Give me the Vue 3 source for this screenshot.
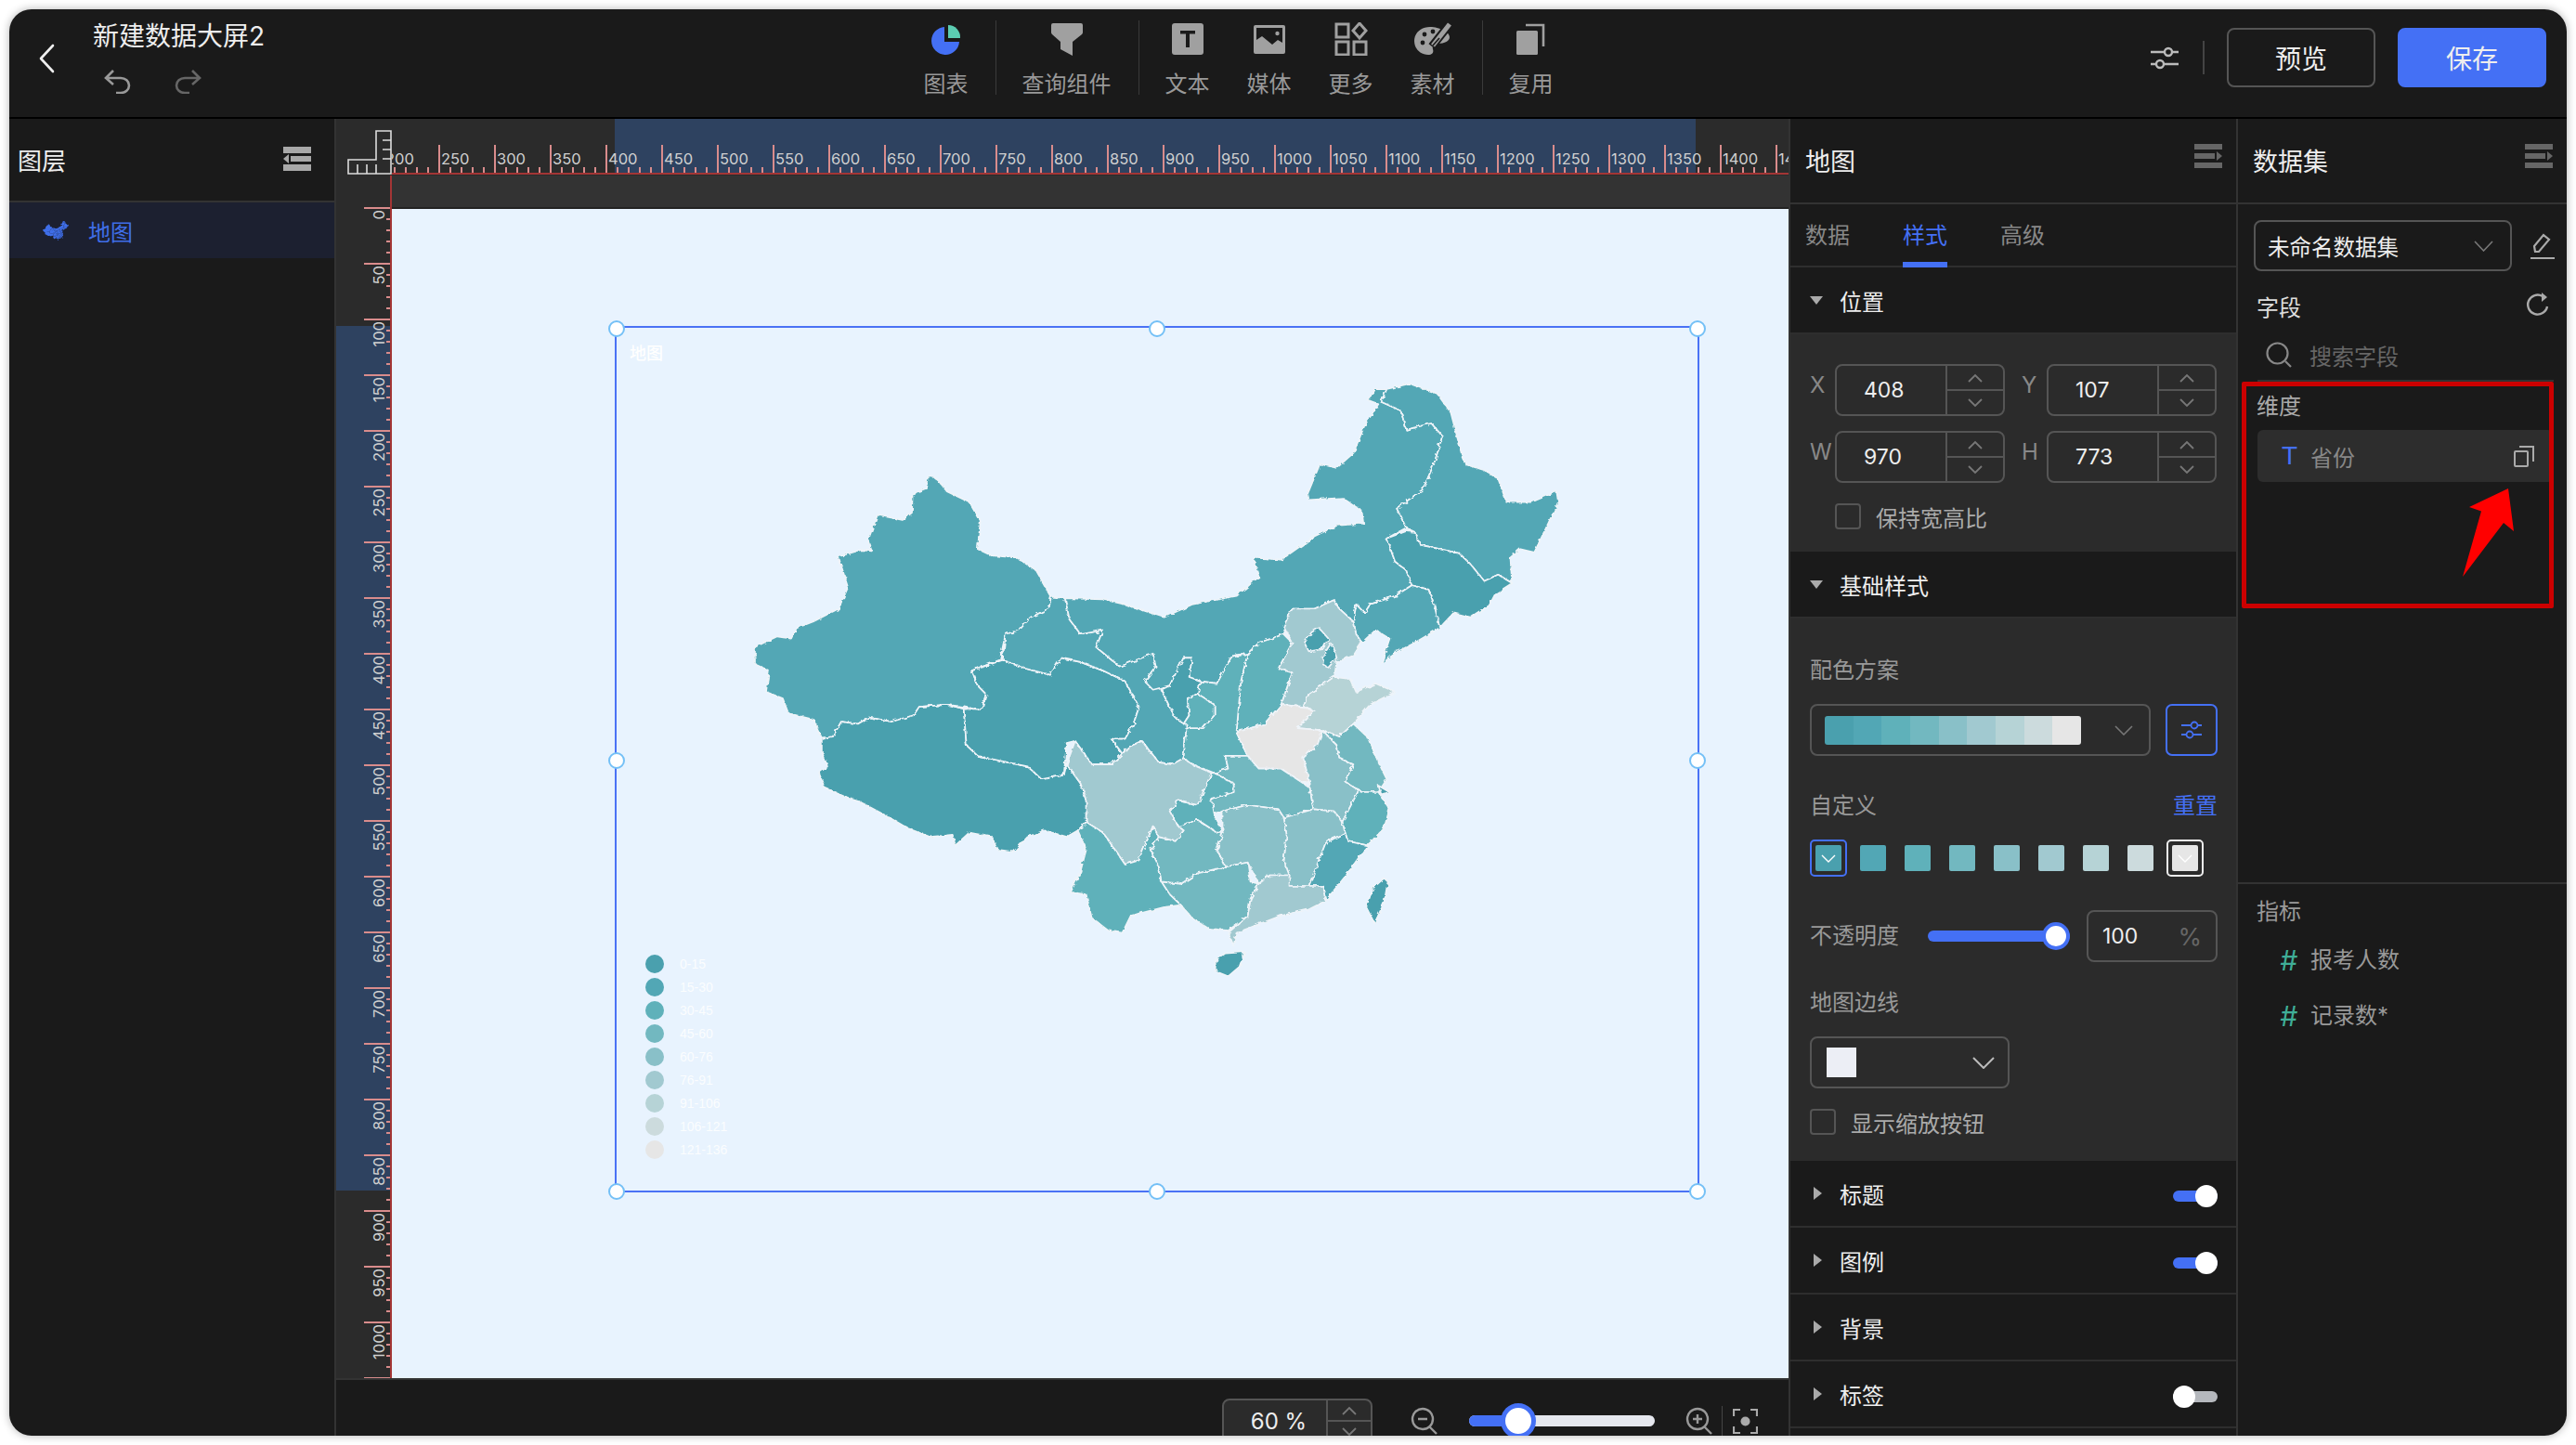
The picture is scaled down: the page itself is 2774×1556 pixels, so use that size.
<template>
  <div class="page">
    <div class="app">
      <!-- top bar -->
      <header class="topbar">
        <div class="top-left">
          <svg class="back" width="18" height="32" viewBox="0 0 18 32"><path d="M16 2 3 16l13 14" fill="none" stroke="#eee" stroke-width="2.6" stroke-linecap="round" stroke-linejoin="round"/></svg>
          <div class="title-col">
            <div class="title">新建数据大屏2</div>
            <div class="history">
              <svg width="30" height="27" viewBox="0 0 30 27"><path d="M10 2 2 10l8 7M3 10h15a9 8 0 0 1 0 16h-5" fill="none" stroke="#999" stroke-width="2.6"/></svg>
              <svg width="30" height="27" viewBox="0 0 30 27"><path d="M20 2l8 8-8 7M27 10H12a9 8 0 0 0 0 16h5" fill="none" stroke="#666" stroke-width="2.6"/></svg>
            </div>
          </div>
        </div>

        <div class="tools">
          <div class="tool">
            <svg width="34" height="34" viewBox="0 0 34 34"><path d="M15 4A15 15 0 1 0 31 20H15Z" fill="#4470f5"/><path d="M19 2a13 13 0 0 1 13 14H19Z" fill="#5ccdb2"/></svg>
            <span>图表</span>
          </div>
          <i class="tool-sep"></i>
          <div class="tool wide">
            <svg width="34" height="36" viewBox="0 0 34 36"><path d="M2 1h30q2 0 2 2v8q0 1-1 2L23 21v15l-13-7v-8L1 13q-1-1-1-2V3q0-2 2-2Z" fill="#a0a0a0"/></svg>
            <span>查询组件</span>
          </div>
          <i class="tool-sep"></i>
          <div class="tool">
            <svg width="34" height="36" viewBox="0 0 34 36"><rect y="1" width="34" height="34" rx="3" fill="#a0a0a0"/><path d="M9 9h16v3.500h-6V27h-4V12.500H9Z" fill="#1a1a1a"/></svg>
            <span>文本</span>
          </div>
          <div class="tool gap">
            <svg width="34" height="36" viewBox="0 0 34 36"><rect y="3" width="34" height="31" rx="2" fill="#a0a0a0"/><path d="M3 6h28v16l-5-3-6 5-11-9-6 4Z" fill="#1a1a1a"/><circle cx="25.500" cy="12" r="2.200" fill="#a0a0a0"/></svg>
            <span>媒体</span>
          </div>
          <div class="tool gap">
            <svg width="36" height="36" viewBox="0 0 36 36" fill="none" stroke="#a0a0a0" stroke-width="3"><rect x="2" y="2" width="13" height="14"/><path d="m27 1 7 8-7 8-7-8Z"/><rect x="2" y="21" width="13" height="14"/><rect x="21" y="21" width="13" height="14"/></svg>
            <span>更多</span>
          </div>
          <div class="tool gap">
            <svg width="40" height="36" viewBox="0 0 40 36"><path d="M19 5C8 4 0 11 0 20c0 9 7 15 15 15 5 0 6-3 5-6-1-4 1-6 5-6 8 0 13-3 13-7 0-5-9-10-19-11Z" fill="#a0a0a0"/><g fill="#1a1a1a"><circle cx="11" cy="13" r="2.400"/><circle cx="9" cy="22" r="2.400"/><circle cx="20" cy="10" r="2.400"/></g><path d="M38 2 19 26" stroke="#1a1a1a" stroke-width="9" fill="none"/><path d="M38 2 20 25" stroke="#a0a0a0" stroke-width="5" fill="none"/><path d="M27 17 20 25" stroke="#1a1a1a" stroke-width="1.600" fill="none"/></svg>
            <span>素材</span>
          </div>
          <i class="tool-sep"></i>
          <div class="tool">
            <svg width="32" height="36" viewBox="0 0 32 36"><rect x="0" y="9" width="23" height="26" rx="1.500" fill="#a0a0a0"/><path d="M10 3h19v23" fill="none" stroke="#a0a0a0" stroke-width="2.600"/></svg>
            <span>复用</span>
          </div>
        </div>

        <div class="top-right">
          <svg class="sliders" width="30" height="25" viewBox="0 0 30 25" fill="none" stroke="#bbb" stroke-width="2.400"><path d="M0 6h15M23 6h7M0 19h6M14 19h16"/><circle cx="19" cy="6" r="4"/><circle cx="10" cy="19" r="4"/></svg>
          <i class="top-sep"></i>
          <button class="btn">预览</button>
          <button class="btn primary">保存</button>
        </div>
      </header>

      <div class="main">
        <!-- layers -->
        <aside class="layers">
          <div class="panel-head">
            <span class="layers-title">图层</span>
            <svg class="fold-left" width="30" height="26" viewBox="0 0 30 26" fill="#a8a8a8"><rect width="30" height="7"/><rect y="19" width="30" height="7"/><rect x="8" y="10" width="22" height="6"/><path d="M6 8v10L0 13Z"/></svg>
          </div>
          <div class="layer-row">
            <svg width="28" height="21" viewBox="50 70 1450 1400" preserveAspectRatio="none">
              <polygon v-for="p in provinces" :key="p.name" :points="p.pts" fill="#3f6ee8"/>
            </svg>
            <span>地图</span>
          </div>
        </aside>

        <!-- stage -->
        <section class="stage">
          <div class="stage-top">
            <div class="corner">
              <svg width="60" height="61" viewBox="0 0 60 61" fill="none" stroke="#ddd" stroke-width="1.600"><path d="M13 44h30V13h16v46H13Z"/><path d="M23 49v10M33 49v10M43 49v10M50 23h9M50 33h9M50 43h9"/></svg>
            </div>
            <svg class="hruler" width="1504" height="61">
              <rect x="240" width="1164" height="59" fill="#2e4260"/>
              <g v-for="t in hTicks" :key="t.x">
                <rect :x="t.x - 1" :y="t.major ? 28 : 52" width="2" :height="t.major ? 31 : 7" fill="#d98c8c"/>
                <text v-if="t.major" :x="t.x + 2" y="49" class="tick-text">{{ t.v }}</text>
              </g>
              <rect y="58" width="1504" height="2" fill="#a33535"/>
            </svg>
          </div>
          <div class="stage-mid">
            <svg class="vruler" width="60" height="1295">
              <rect y="162" width="58" height="931" fill="#2e4260"/>
              <g v-for="t in vTicks" :key="t.y">
                <rect :x="t.major ? 30 : 54" :y="t.y - 1" :width="t.major ? 30 : 6" height="2" fill="#d98c8c"/>
                <text v-if="t.major" class="tick-text" text-anchor="end" :transform="`translate(52 ${t.y + 2}) rotate(-90)`">{{ t.v }}</text>
              </g>
              <rect x="58" width="2" height="1295" fill="#a33535"/>
            </svg>
            <div class="stage-body">
              <div class="band"></div>
              <div class="canvas">
                <svg class="map" width="940" height="720" viewBox="0 0 1568 1568" preserveAspectRatio="none">
                  <defs>
                    <filter id="rough" x="-2%" y="-2%" width="104%" height="104%">
                      <feTurbulence type="fractalNoise" baseFrequency="0.09" numOctaves="3" seed="4"/>
                      <feDisplacementMap in="SourceGraphic" scale="9"/>
                    </filter>
                  </defs>
                  <g filter="url(#rough)">
                    <polygon v-for="p in provinces" :key="p.name" :points="p.pts" :fill="p.c" stroke="#eff4f9" stroke-width="1.700" vector-effect="non-scaling-stroke" stroke-linejoin="round"/>
                  </g>
                </svg>
                <div class="selection">
                  <span class="map-name">地图</span>
                  <div class="legend">
                    <div v-for="(l, i) in legend" :key="l" class="legend-row">
                      <i :style="{ background: palette[i] }"></i>{{ l }}
                    </div>
                  </div>
                  <i v-for="h in handles" :key="h.k" class="handle" :style="{ left: h.x, top: h.y }"></i>
                </div>
              </div>
            </div>
          </div>
          <div class="stage-bottom">
            <div class="zoom-input">
              <div class="zoom-value">60 %</div>
              <div class="stepper">
                <span><svg width="16" height="10" viewBox="0 0 16 10"><path d="M1 9l7-7 7 7" fill="none" stroke="#777" stroke-width="1.800"/></svg></span>
                <span><svg width="16" height="10" viewBox="0 0 16 10"><path d="M1 1l7 7 7-7" fill="none" stroke="#777" stroke-width="1.800"/></svg></span>
              </div>
            </div>
            <svg class="z-out" width="30" height="30" viewBox="0 0 30 30" fill="none" stroke="#999" stroke-width="2.400"><circle cx="13" cy="13" r="11"/><path d="M20 21l8 8M8 13h10"/></svg>
            <div class="zoom-slider"><i class="zoom-fill"></i><i class="zoom-knob"></i></div>
            <svg class="z-in" width="30" height="30" viewBox="0 0 30 30" fill="none" stroke="#999" stroke-width="2.400"><circle cx="13" cy="13" r="11"/><path d="M20 21l8 8M8 13h10M13 8v10"/></svg>
            <i class="zoom-sep"></i>
            <svg width="27" height="27" viewBox="0 0 27 27" fill="none" stroke="#aaa" stroke-width="2.200"><path d="M1 8V1h7M19 1h7v7M26 19v7h-7M8 26H1v-7"/><circle cx="13.500" cy="13.500" r="5" fill="#aaa" stroke="none"/></svg>
          </div>
        </section>

        <!-- props -->
        <section class="props">
          <div class="panel-head right-head">
            <span class="panel-title">地图</span>
            <svg class="fold-right" width="30" height="26" viewBox="0 0 30 26" fill="#666"><rect width="30" height="6"/><rect y="20" width="30" height="6"/><rect y="10" width="22" height="6"/><path d="M24 8v10l6-5Z"/></svg>
          </div>
          <div class="tabs">
            <span>数据</span><span class="active">样式</span><span>高级</span>
          </div>

          <div class="sec-head"><i class="tri-down"></i>位置</div>
          <div class="sec-body pos-body">
            <div class="pos-grid">
              <div v-for="f in posFields" :key="f.k" class="pos-field">
                <label>{{ f.k }}</label>
                <div class="num-input">
                  <div class="num-value">{{ f.v }}</div>
                  <div class="stepper">
                    <span><svg width="16" height="10" viewBox="0 0 16 10"><path d="M1 9l7-7 7 7" fill="none" stroke="#777" stroke-width="1.800"/></svg></span>
                    <span><svg width="16" height="10" viewBox="0 0 16 10"><path d="M1 1l7 7 7-7" fill="none" stroke="#777" stroke-width="1.800"/></svg></span>
                  </div>
                </div>
              </div>
            </div>
            <div class="check-row keep"><i class="check"></i>保持宽高比</div>
          </div>

          <div class="sec-head"><i class="tri-down"></i>基础样式</div>
          <div class="sec-body base-body">
            <div class="field-label">配色方案</div>
            <div class="scheme-row">
              <div class="scheme-select">
                <div class="scheme-bar"><i v-for="c in palette" :key="c" :style="{ background: c }"></i></div>
                <svg width="20" height="11" viewBox="0 0 20 11"><path d="M1 1l9 9 9-9" fill="none" stroke="#777" stroke-width="1.600"/></svg>
              </div>
              <div class="scheme-btn">
                <svg width="22" height="20" viewBox="0 0 22 20" fill="none" stroke="#4470f5" stroke-width="1.800"><path d="M0 5h10M18 5h4M0 15h5M13 15h9"/><circle cx="14" cy="5" r="3.500"/><circle cx="9" cy="15" r="3.500"/></svg>
              </div>
            </div>
            <div class="custom-row">
              <span class="field-label">自定义</span>
              <span class="reset">重置</span>
            </div>
            <div class="swatches">
              <div v-for="(c, i) in palette" :key="c" class="swatch" :class="{ first: i === 0, last: i === 8 }">
                <i :style="{ background: c }">
                  <svg v-if="i === 0 || i === 8" width="16" height="9" viewBox="0 0 16 9"><path d="M1 1l7 7 7-7" fill="none" stroke="#fff" stroke-width="1.400"/></svg>
                </i>
              </div>
            </div>
            <div class="opacity-row">
              <span class="field-label">不透明度</span>
              <div class="op-slider"><i class="op-knob"></i></div>
              <div class="op-input"><span>100</span><em>%</em></div>
            </div>
            <div class="field-label border-label">地图边线</div>
            <div class="border-select">
              <i class="border-color"></i>
              <svg width="24" height="13" viewBox="0 0 24 13"><path d="M1 1l11 11L23 1" fill="none" stroke="#bbb" stroke-width="2"/></svg>
            </div>
            <div class="check-row zoom-check"><i class="check"></i>显示缩放按钮</div>
          </div>

          <div v-for="s in collapsed" :key="s.name" class="sec-head fold">
            <i class="tri-right"></i>{{ s.name }}
            <div v-if="s.on !== null" class="toggle" :class="{ on: s.on }"><i></i></div>
          </div>
        </section>

        <!-- dataset -->
        <aside class="dataset">
          <div class="panel-head right-head">
            <span class="panel-title">数据集</span>
            <svg class="fold-right" width="30" height="26" viewBox="0 0 30 26" fill="#666"><rect width="30" height="6"/><rect y="20" width="30" height="6"/><rect y="10" width="22" height="6"/><path d="M24 8v10l6-5Z"/></svg>
          </div>
          <div class="dims">
            <div class="ds-row">
              <div class="ds-select">
                <span>未命名数据集</span>
                <svg width="21" height="12" viewBox="0 0 21 12"><path d="M1 1l9.500 10L20 1" fill="none" stroke="#777" stroke-width="1.600"/></svg>
              </div>
              <svg width="26" height="28" viewBox="0 0 26 28" fill="none" stroke="#aaa" stroke-width="2.200"><path d="M5 20l-1-6L14 2l6 5L9 20ZM0 27h26"/></svg>
            </div>
            <div class="field-head">
              <span>字段</span>
              <svg width="26" height="25" viewBox="0 0 26 25" fill="none" stroke="#aaa" stroke-width="2.400"><path d="M23 15A10.500 10.500 0 1 1 18 4"/><path d="M17 0l6 5-6 5" fill="#aaa" stroke="none"/></svg>
            </div>
            <div class="search">
              <svg width="28" height="28" viewBox="0 0 28 28" fill="none" stroke="#888" stroke-width="2.200"><circle cx="12.500" cy="12.500" r="11"/><path d="M21 21l6 6"/></svg>
              <span>搜索字段</span>
            </div>
            <div class="dim-title">维度</div>
            <div class="dim-item">
              <span class="t-mark">T</span>
              <span class="dim-name">省份</span>
              <svg width="22" height="24" viewBox="0 0 22 24" fill="none" stroke="#aaa" stroke-width="2"><rect x="1" y="7" width="14" height="16" rx="1"/><path d="M6 2h15v16"/></svg>
            </div>
          </div>
          <div class="metrics">
            <div class="metric-title">指标</div>
            <div class="metric"><em>#</em>报考人数</div>
            <div class="metric second"><em>#</em>记录数*</div>
          </div>

          <!-- annotation -->
          <div class="red-box"></div>
          <svg class="red-arrow" width="56" height="96" viewBox="0 0 56 96"><path d="M49 0 7 20l13 4.500L0 95l44-58 11 9Z" fill="#ff0000"/></svg>
        </aside>
      </div>
    </div>
  </div>
</template>

<script setup>
import { computed } from 'vue'

const palette = ['#4aa0ae', '#52a7b5', '#5fb1ba', '#72b8c0', '#89c0c8', '#a1c9d0', '#b6d3d6', '#ccdbdd', '#e6e6e6']
const legend = ['0-15', '15-30', '30-45', '45-60', '60-76', '76-91', '91-106', '106-121', '121-136']

const posFields = [
  { k: 'X', v: 408 },
  { k: 'Y', v: 107 },
  { k: 'W', v: 970 },
  { k: 'H', v: 773 }
]

const collapsed = [
  { name: '标题', on: true },
  { name: '图例', on: true },
  { name: '背景', on: null },
  { name: '标签', on: false }
]

const handles = [
  { k: 'tl', x: '0%', y: '0%' },
  { k: 'tc', x: '50%', y: '0%' },
  { k: 'tr', x: '100%', y: '0%' },
  { k: 'ml', x: '0%', y: '50%' },
  { k: 'mr', x: '100%', y: '50%' },
  { k: 'bl', x: '0%', y: '100%' },
  { k: 'bc', x: '50%', y: '100%' },
  { k: 'br', x: '100%', y: '100%' }
]

// ruler ticks: 12px per 10 units, labelled every 50
const hTicks = computed(() => {
  const out = []
  for (let v = 200; v <= 1450; v += 10) {
    out.push({ v, x: 51 + (v - 250) * 1.2, major: v % 50 === 0 })
  }
  return out.filter(t => t.x >= 0 || t.major)
})
const vTicks = computed(() => {
  const out = []
  for (let v = 0; v <= 1050; v += 10) {
    out.push({ v, y: 35 + v * 1.2, major: v % 50 === 0 })
  }
  return out
})

const [c1, c2, c3, c4, c5, c6, c7, , c9] = palette

// province outlines, in coordinates of the map svg's viewBox
const provinces = [
  { name: 'xinjiang', c: c2, pts: '375,290 385,300 400,325 440,350 460,395 455,460 480,475 525,480 560,510 587,572 583,600 550,620 530,650 505,660 495,720 445,745 455,780 470,800 462,838 430,830 400,825 350,830 340,850 300,865 260,855 240,870 210,865 195,900 175,903 160,860 115,845 105,810 75,795 80,745 55,730 55,690 95,665 120,670 130,645 160,630 205,600 222,550 205,478 245,462 265,465 258,440 275,380 320,392 337,375 338,330 362,318 365,292' },
  { name: 'tibet', c: c1, pts: '175,903 195,900 210,865 240,870 260,855 300,865 340,850 350,830 400,825 430,835 435,920 455,945 490,955 545,970 570,1000 610,990 615,965 640,1010 650,1050 650,1100 635,1120 615,1135 575,1120 545,1135 520,1170 490,1165 480,1135 440,1125 415,1155 410,1130 370,1135 330,1115 290,1085 240,1050 215,1040 180,1020 170,985 185,970 175,935' },
  { name: 'qinghai', c: c1, pts: '445,745 500,720 540,740 585,755 605,715 640,725 680,745 720,770 745,830 735,870 720,905 695,905 715,940 695,965 660,965 630,910 615,915 610,990 570,1000 545,970 490,955 455,945 435,920 430,835 462,838 470,800 455,780' },
  { name: 'gansu', c: c2, pts: '587,572 612,575 620,625 640,660 680,650 668,690 710,735 770,705 775,735 755,770 785,790 800,830 810,855 830,870 830,880 830,890 825,950 805,965 780,960 750,910 725,925 715,940 695,905 720,905 735,870 745,830 720,770 680,745 640,725 605,715 585,755 540,740 500,720 505,660 530,650 550,620 583,600' },
  { name: 'neimeng', c: c2, pts: '612,575 680,578 720,590 790,620 840,590 920,570 960,525 950,480 1000,485 1060,430 1100,405 1148,400 1145,370 1110,340 1050,345 1048,330 1070,260 1100,270 1130,235 1150,170 1175,120 1155,110 1170,85 1190,85 1180,115 1215,135 1225,180 1270,165 1290,195 1275,260 1255,320 1208,365 1225,410 1190,435 1205,490 1225,510 1235,545 1205,570 1160,590 1150,610 1135,590 1130,630 1105,600 1095,580 1060,600 1020,600 1005,660 960,680 940,705 910,715 885,775 855,770 835,760 840,715 825,715 800,780 770,790 755,770 775,735 770,705 710,735 668,690 680,650 640,660 620,625' },
  { name: 'heilongjiang', c: c2, pts: '1190,85 1230,72 1280,95 1305,140 1325,240 1332,262 1365,275 1390,295 1405,350 1450,350 1495,325 1498,350 1480,400 1455,468 1430,460 1412,480 1415,540 1390,520 1365,535 1340,495 1320,470 1250,450 1240,420 1225,410 1208,365 1255,320 1275,260 1290,195 1270,165 1225,180 1215,135 1180,115' },
  { name: 'jilin', c: c1, pts: '1190,435 1225,418 1240,420 1250,450 1320,470 1340,495 1365,535 1390,520 1415,540 1385,565 1375,590 1340,620 1310,610 1285,645 1275,590 1265,555 1235,545 1225,510 1205,490' },
  { name: 'liaoning', c: c2, pts: '1235,545 1265,555 1275,590 1285,645 1240,680 1210,700 1180,730 1195,670 1170,650 1145,680 1135,660 1130,630 1135,590 1150,610 1160,590 1205,570' },
  { name: 'hebei', c: c6, pts: '1020,600 1060,600 1095,580 1105,600 1130,630 1135,660 1145,680 1130,710 1100,725 1095,765 1050,800 1040,830 1000,825 1020,750 995,740 1020,680 1005,640' },
  { name: 'beijing', c: c1, pts: '1068,645 1085,670 1075,695 1050,700 1042,680 1055,655' },
  { name: 'tianjin', c: c1, pts: '1090,680 1100,715 1085,738 1075,730 1078,705' },
  { name: 'shandong', c: c7, pts: '1095,760 1125,765 1135,795 1170,775 1205,795 1160,825 1130,870 1105,900 1075,885 1030,880 1060,840 1040,830 1050,800' },
  { name: 'shanxi', c: c3, pts: '1005,660 1020,680 995,740 1020,750 1000,825 970,870 920,890 928,770 940,705 960,680' },
  { name: 'shaanxi', c: c3, pts: '910,715 940,705 928,770 920,890 940,945 900,945 905,975 880,985 840,965 815,960 825,950 830,880 860,880 880,850 880,825 850,800 855,770 885,775' },
  { name: 'ningxia', c: c1, pts: '825,715 840,715 835,760 855,770 850,800 832,810 835,850 825,870 810,855 800,830 785,790 800,780' },
  { name: 'gansu-east', c: c3, pts: '832,810 850,800 880,825 880,850 860,880 830,880 830,870 825,870 835,850' },
  { name: 'henan', c: c9, pts: '1000,825 1040,830 1060,840 1030,880 1075,885 1065,920 1040,950 1052,1010 1035,1005 1000,975 960,975 940,945 920,890 970,870' },
  { name: 'hubei', c: c4, pts: '900,945 940,945 960,975 1000,975 1035,1005 1052,1020 1058,1070 1005,1090 995,1070 940,1060 895,1075 880,1080 875,1045 915,1030 915,1010 880,985 905,975' },
  { name: 'anhui', c: c5, pts: '1075,885 1065,920 1040,950 1052,1010 1052,1020 1058,1070 1095,1075 1110,1100 1140,1025 1115,1005 1130,965 1105,950 1100,920' },
  { name: 'jiangsu', c: c4, pts: '1075,885 1105,900 1130,870 1155,900 1175,960 1190,1000 1175,1030 1145,1030 1115,1005 1130,965 1105,950 1100,920' },
  { name: 'shanghai', c: c1, pts: '1175,1015 1195,1030 1180,1035' },
  { name: 'zhejiang', c: c3, pts: '1140,1025 1145,1030 1175,1030 1195,1070 1185,1115 1155,1155 1120,1145 1115,1125 1110,1100' },
  { name: 'jiangxi', c: c5, pts: '1005,1090 1058,1070 1095,1075 1110,1100 1115,1125 1080,1150 1065,1200 1050,1250 1015,1250 1015,1225 1005,1190 1010,1130' },
  { name: 'fujian', c: c2, pts: '1115,1125 1120,1145 1155,1155 1120,1220 1080,1285 1075,1250 1050,1250 1065,1200 1080,1150' },
  { name: 'hunan', c: c5, pts: '895,1075 940,1060 995,1070 1005,1090 1010,1130 1005,1190 1015,1225 980,1225 960,1245 940,1195 900,1205 885,1165 895,1125' },
  { name: 'guangdong', c: c6, pts: '960,1245 980,1225 1015,1225 1015,1250 1050,1250 1075,1250 1080,1285 1050,1305 1000,1320 960,1340 920,1360 915,1390 905,1360 940,1320 945,1280' },
  { name: 'guangxi', c: c4, pts: '785,1240 820,1245 850,1220 900,1205 940,1195 945,1240 960,1245 945,1280 940,1320 905,1355 870,1350 840,1325 820,1295 800,1270' },
  { name: 'guizhou', c: c4, pts: '765,1165 780,1135 810,1145 825,1120 815,1110 850,1095 885,1125 895,1125 885,1165 900,1205 850,1220 820,1245 785,1240 780,1205' },
  { name: 'chongqing', c: c3, pts: '880,985 915,1010 915,1030 875,1045 880,1080 895,1125 885,1125 850,1095 815,1110 800,1075 815,1050 850,1060 875,985' },
  { name: 'sichuan', c: c6, pts: '615,965 630,910 660,965 695,965 715,940 725,925 750,910 780,960 805,965 825,950 840,965 875,985 850,1060 815,1050 800,1075 815,1110 825,1120 810,1145 780,1135 770,1110 745,1190 720,1200 680,1125 650,1100 650,1050 640,1010' },
  { name: 'yunnan', c: c3, pts: '650,1100 680,1125 720,1200 745,1190 770,1110 780,1135 765,1165 780,1205 785,1240 800,1270 820,1295 790,1300 730,1320 715,1360 690,1355 660,1325 650,1270 622,1265 640,1215 650,1165 635,1120' },
  { name: 'taiwan', c: c1, pts: '1185,1232 1192,1240 1185,1290 1168,1338 1153,1300 1165,1255' },
  { name: 'hainan', c: c1, pts: '900,1408 935,1405 925,1440 905,1462 882,1450 882,1425' }
]
</script>

<style>
html, body { margin: 0; background: #fff; }
</style>

<style scoped>
.page {
  width: 2774px;
  height: 1556px;
  padding: 10px;
  box-sizing: border-box;
  font-family: "Inter", "Noto Sans CJK SC", sans-serif;
  overflow: hidden;
}
.app {
  width: 2754px;
  height: 1536px;
  background: #1a1a1a;
  border-radius: 24px;
  box-shadow: 0 0 10px rgba(0, 0, 0, 0.3);
  overflow: hidden;
  display: flex;
  flex-direction: column;
}
i, em { font-style: normal; display: block; }

/* top bar */
.topbar {
  height: 116px;
  flex: none;
  border-bottom: 2px solid #000;
  display: flex;
}
.top-left { width: 984.5px; flex: none; display: flex; }
.back { margin: 37px 0 0 31px; }
.title-col { margin-left: 41px; padding-top: 14px; }
.title { font-size: 28px; line-height: 30px; color: #eee; }
.history { display: flex; gap: 45px; margin: 20px 0 0 12px; }
.tools { display: flex; padding-top: 14px; align-items: flex-start; }
.tool {
  width: 48px;
  display: flex;
  flex-direction: column;
  align-items: center;
  color: #999;
  font-size: 24px;
  line-height: 26px;
}
.tool svg { height: 36px; margin-bottom: 18px; }
.tool span { white-space: nowrap; }
.tool.wide { width: 96px; }
.tool.gap { margin-left: 40px; }
.tool-sep { width: 1px; height: 80px; margin: -2px 28px 0 29px; background: #3a3a3a; }
.top-right { margin-left: auto; padding-right: 22px; display: flex; align-items: center; height: 84px; margin-top: 10px; }
.sliders { margin-right: 26px; }
.top-sep { width: 2px; height: 36px; background: #444; margin-right: 24px; }
.btn {
  width: 160px;
  height: 64px;
  border: 2px solid #555;
  border-radius: 8px;
  background: transparent;
  color: #eee;
  font: 28px "Noto Sans CJK SC", sans-serif;
  padding: 0;
}
.btn.primary { background: #4470f5; border-color: #4470f5; margin-left: 24px; }

.main { flex: 1; display: flex; min-height: 0; }

.panel-head {
  height: 88px;
  border-bottom: 2px solid #333;
  display: flex;
  align-items: center;
  justify-content: space-between;
}

/* layers */
.layers { width: 350px; flex: none; border-right: 2px solid #333; }
.layers-title { font-size: 26px; color: #eee; margin: -2px 0 0 9px; }
.fold-left { margin-right: 25px; margin-top: -2px; }
.layer-row {
  height: 60px;
  background: #1c2030;
  display: flex;
  align-items: center;
  padding-left: 36px;
  gap: 21px;
  color: #3f6ee8;
  font-size: 24px;
}

/* stage */
.stage {
  width: 1564px;
  flex: none;
  border-right: 2px solid #333;
  display: flex;
  flex-direction: column;
  min-height: 0;
}
.stage-top { display: flex; height: 61px; flex: none; background: #2b2b2b; }
.corner { width: 60px; height: 61px; flex: none; }
.hruler { display: block; flex: none; }
.tick-text { font: 16.500px "Inter", sans-serif; fill: #d0d0d0; }
.stage-mid { display: flex; height: 1295px; flex: none; }
.vruler { display: block; flex: none; background: #2b2b2b; }
.stage-body { flex: 1; display: flex; flex-direction: column; min-width: 0; }
.band { height: 34px; flex: none; background: #333; border-bottom: 2px solid #222; }
.canvas { flex: 1; position: relative; background: #e8f3fe; overflow: hidden; }
.map { position: absolute; left: 358px; top: 155px; }
.selection {
  position: absolute;
  left: 240px;
  top: 126px;
  width: 1164px;
  height: 929px;
  border: 2px solid #4a72f5;
  box-sizing: content-box;
}
.map-name { position: absolute; left: 14px; top: 16px; font-size: 18px; color: #fff; line-height: 24px; font-weight: 500; }
.legend { position: absolute; left: 31px; top: 672px; }
.legend-row {
  height: 25px;
  display: flex;
  align-items: center;
  gap: 17px;
  font: 14px "Liberation Sans", sans-serif;
  color: rgba(255, 255, 255, 0.85);
}
.legend-row i { width: 20px; height: 20px; border-radius: 50%; }
.handle {
  position: absolute;
  width: 14px;
  height: 14px;
  margin: -8px 0 0 -9px;
  border: 2px solid #74c0f6;
  border-radius: 50%;
  background: #fff;
}
.stage-bottom {
  height: 60px;
  flex: none;
  border-top: 2px solid #333;
  display: flex;
  padding: 20px 0 0 954px;
  overflow: hidden;
}
.zoom-input {
  width: 158px;
  height: 44px;
  flex: none;
  display: flex;
  border: 2px solid #555;
  border-radius: 8px;
  background: #2b2b2b;
  box-sizing: content-box;
}
.zoom-value { width: 110px; color: #eee; font-size: 24px; line-height: 46px; text-align: center; padding-left: 8px; box-sizing: border-box; }
.stepper { flex: 1; border-left: 2px solid #555; display: flex; flex-direction: column; }
.stepper span { flex: 1; display: flex; align-items: center; justify-content: center; }
.stepper span + span { border-top: 2px solid #555; }
.z-out { margin: 9px 0 0 41px; flex: none; }
.zoom-slider {
  position: relative;
  width: 200px;
  height: 12px;
  flex: none;
  margin: 18px 0 0 33px;
  background: #e5e7ee;
  border-radius: 6px;
}
.zoom-fill { position: absolute; left: 0; top: 0; bottom: 0; width: 54px; background: #4470f5; border-radius: 6px 0 0 6px; }
.zoom-knob {
  position: absolute;
  left: 34px;
  top: -13px;
  width: 28px;
  height: 28px;
  border: 5px solid #4470f5;
  border-radius: 50%;
  background: #fff;
}
.z-in { margin: 9px 0 0 33px; flex: none; }
.zoom-sep { width: 1px; height: 40px; margin: 8px 11px 0 9px; background: #444; flex: none; }
.stage-bottom > svg:last-child { margin-top: 11px; flex: none; }

/* props */
.props { width: 480px; flex: none; border-right: 2px solid #333; }
.right-head { height: 90px; padding: 0 15px 0 16px; }
.panel-title { font-size: 27px; color: #eee; margin-top: -2px; }
.fold-right { margin-top: -10px; }
.tabs {
  height: 66px;
  border-bottom: 2px solid #2e2e2e;
  display: flex;
  padding-left: 16px;
  gap: 57px;
  font-size: 24px;
  line-height: 68px;
  color: #888;
}
.tabs .active { color: #4470f5; height: 68px; border-bottom: 6px solid #4470f5; box-sizing: border-box; position: relative; }
.sec-head {
  height: 70px;
  border-bottom: 2px solid #2e2e2e;
  display: flex;
  align-items: center;
  padding-left: 21px;
  font-size: 24px;
  color: #eee;
  background: #1a1a1a;
}
.tri-down { width: 0; height: 0; border: 7px solid transparent; border-top: 9px solid #aaa; border-bottom: 0; margin-right: 18px; }
.tri-right { width: 0; height: 0; border: 7px solid transparent; border-left: 9px solid #aaa; border-right: 0; margin: 0 19px 0 4px; }
.sec-body { background: #2b2b2b; padding-left: 21px; padding-right: 20px; }
.pos-body { padding-top: 32px; padding-bottom: 24px; }
.pos-grid { display: grid; grid-template-columns: 210px 210px; column-gap: 18px; row-gap: 16px; }
.pos-field { display: flex; align-items: center; }
.pos-field label { width: 27px; font-size: 24px; color: #888; margin-top: -12px; }
.num-input { flex: 1; height: 56px; display: flex; border: 2px solid #555; border-radius: 8px; box-sizing: border-box; }
.num-value { width: 117px; padding-left: 29px; box-sizing: border-box; font-size: 23px; line-height: 52px; color: #eee; }
.check-row { display: flex; align-items: center; gap: 16px; font-size: 24px; color: #aaa; }
.check { width: 28px; height: 28px; border: 2px solid #555; border-radius: 4px; box-sizing: border-box; }
.keep { margin: 22px 0 0 27px; height: 28px; }

.base-body { padding-top: 39px; padding-bottom: 28px; }
.field-label { font-size: 24px; line-height: 34px; color: #999; white-space: nowrap; }
.scheme-row { display: flex; justify-content: space-between; margin-top: 19px; }
.scheme-select {
  width: 367px;
  height: 56px;
  border: 2px solid #555;
  border-radius: 8px;
  box-sizing: border-box;
  display: flex;
  align-items: center;
  padding-left: 14px;
}
.scheme-bar { width: 276px; height: 31px; display: flex; border-radius: 3px; overflow: hidden; margin-right: 36px; }
.scheme-bar i { flex: 1; }
.scheme-btn {
  width: 56px;
  height: 56px;
  border: 2px solid #4470f5;
  border-radius: 7px;
  box-sizing: border-box;
  display: flex;
  align-items: center;
  justify-content: center;
}
.custom-row { display: flex; justify-content: space-between; margin-top: 37px; height: 34px; }
.reset { color: #4470f5; font-size: 24px; line-height: 34px; }
.swatches { display: flex; gap: 8px; margin-top: 19px; }
.swatch { width: 40px; height: 40px; display: flex; align-items: center; justify-content: center; border-radius: 5px; border: 2px solid transparent; box-sizing: border-box; }
.swatch i { width: 28px; height: 28px; display: flex; align-items: center; justify-content: center; border-radius: 2px; }
.swatch.first { border-color: #4470f5; }
.swatch.last { border-color: #eee; }
.opacity-row { display: flex; align-items: center; margin-top: 36px; height: 56px; }
.op-slider { position: relative; width: 153px; height: 12px; margin-left: 31px; background: #4470f5; border-radius: 6px; }
.op-knob {
  position: absolute;
  left: 123px;
  top: -9px;
  width: 22px;
  height: 22px;
  border: 4px solid #4470f5;
  border-radius: 50%;
  background: #fff;
}
.op-input {
  width: 141px;
  height: 56px;
  margin-left: auto;
  border: 2px solid #555;
  border-radius: 8px;
  box-sizing: border-box;
  display: flex;
  justify-content: space-between;
  align-items: center;
  padding: 0 15px;
  font-size: 23px;
  color: #eee;
}
.op-input em { color: #666; font-size: 26px; }
.border-label { margin-top: 27px; }
.border-select {
  width: 215px;
  height: 56px;
  margin-top: 19px;
  border: 2px solid #555;
  border-radius: 8px;
  box-sizing: border-box;
  display: flex;
  align-items: center;
  justify-content: space-between;
  padding: 0 14px 0 16px;
}
.border-color { width: 32px; height: 32px; background: #eceef5; }
.zoom-check { margin-top: 22px; height: 28px; }
.fold { position: relative; }
.toggle { position: absolute; right: 20px; top: 32px; width: 48px; height: 12px; border-radius: 6px; background: #b5b8bd; }
.toggle.on { background: #4470f5; }
.toggle i { position: absolute; left: 0; top: -6px; width: 24px; height: 24px; border-radius: 50%; background: #fff; }
.toggle.on i { left: 24px; }

/* dataset */
.dataset { width: 354px; flex: none; position: relative; }
.dims { height: 732px; box-sizing: border-box; padding: 17px 0 0 17px; border-bottom: 2px solid #333; }
.ds-row { display: flex; align-items: center; gap: 20px; }
.ds-select {
  width: 278px;
  height: 55px;
  border: 2px solid #555;
  border-radius: 8px;
  box-sizing: border-box;
  display: flex;
  align-items: center;
  justify-content: space-between;
  padding: 0 18px 0 13px;
  font-size: 23.500px;
  color: #eee;
}
.field-head {
  width: 316px;
  height: 34px;
  margin: 23px 0 0 3px;
  display: flex;
  justify-content: space-between;
  font-size: 24px;
  line-height: 34px;
  color: #ddd;
}
.search {
  width: 310px;
  height: 38px;
  margin: 14px 0 0 4px;
  padding: 0 0 8px 9px;
  border-bottom: 2px solid #333;
  box-sizing: content-box;
  display: flex;
  align-items: center;
  gap: 19px;
  font-size: 24px;
  color: #666;
}
.dim-title { margin: 10px 0 0 3px; font-size: 24px; line-height: 34px; color: #aaa; }
.dim-item {
  width: 319px;
  height: 56px;
  margin: 8px 0 0 4px;
  background: #2d2d2d;
  border-radius: 6px;
  box-sizing: border-box;
  display: flex;
  align-items: center;
  padding: 0 21px 0 26px;
  font-size: 24px;
  color: #888;
}
.t-mark { color: #4470f5; font: 28px "Liberation Sans", sans-serif; width: 31px; }
.dim-name { flex: 1; }
.metrics { padding: 13px 0 0 20px; font-size: 24px; color: #999; }
.metric-title { line-height: 34px; }
.metric { display: flex; align-items: center; line-height: 34px; margin-top: 18px; padding-left: 25px; }
.metric.second { margin-top: 26px; }
.metric em { color: #3fae97; font-size: 30px; font-style: italic; width: 33px; }
.red-box {
  position: absolute;
  left: 4px;
  top: 283px;
  width: 336px;
  height: 244px;
  box-sizing: border-box;
  border: 5px solid #cc0000;
  border-radius: 2px;
}
.red-arrow { position: absolute; left: 242px; top: 398px; }
</style>
